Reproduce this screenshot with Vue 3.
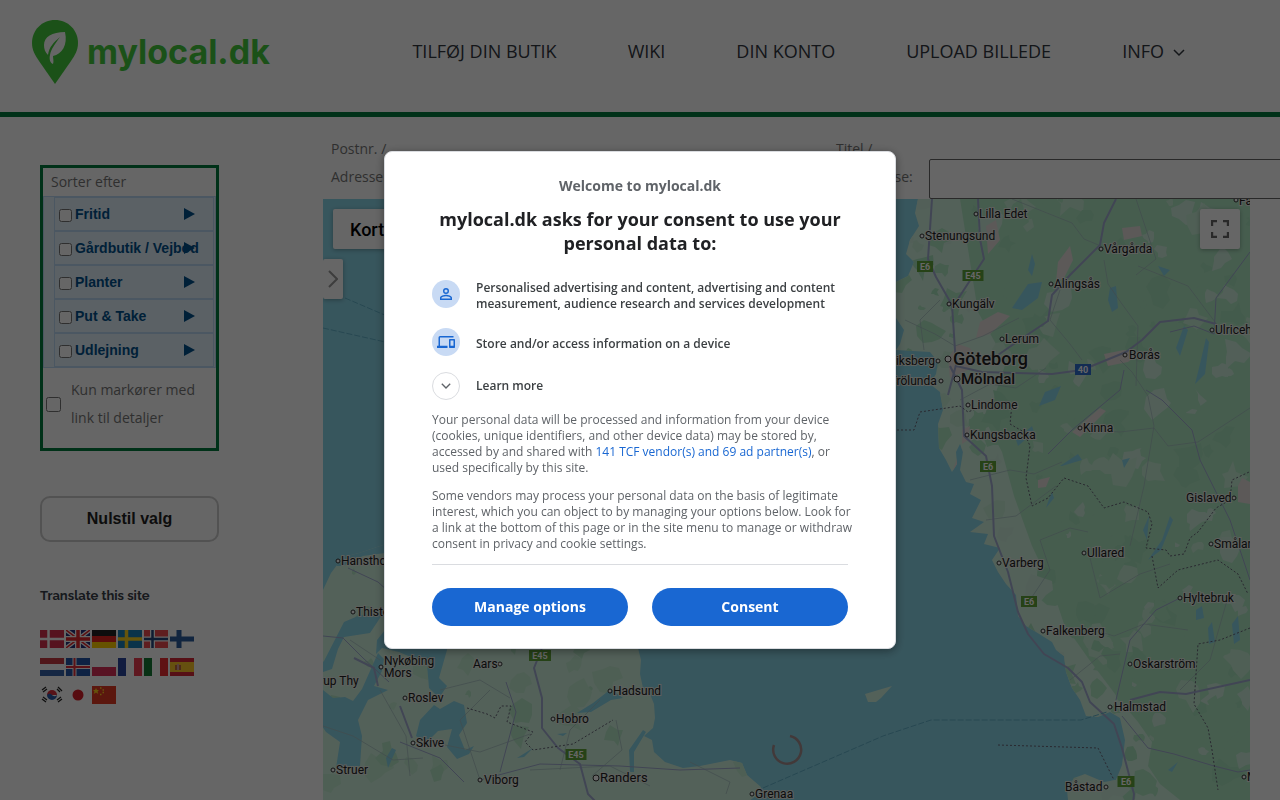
<template>
  <div class="page">
    <header class="header">
      <a href="#" class="logo" aria-label="mylocal.dk">
        <svg class="logo-pin" viewBox="0 0 46 64" width="46" height="64">
          <path d="M23 0C10 0 0 10 0 23c0 7 3 12 7 18l16 23 16-23c4-6 7-11 7-18C46 10 36 0 23 0z" fill="#44cb3c" />
          <path d="M33 12C20 12 12 17 12 25c0 4 1 7 4 10 1-8 6-13 12-18-5 7-9 12-10 18-1 4 0 8 3 9 1-3 0-5 0-8 9-2 15-11 12-24z" fill="#fff" />
        </svg>
        <span class="logo-text">mylocal.dk</span>
      </a>
      <nav class="nav">
        <a v-for="item in menu" :key="item" href="#">{{ item }}</a>
        <a href="#" class="has-sub">
          INFO
          <svg width="12" height="12" viewBox="0 0 12 12"><path d="M1 4l5 5 5-5" fill="none" stroke="currentColor" stroke-width="1.5" /></svg>
        </a>
      </nav>
    </header>

    <div class="content">
      <aside class="sidebar">
        <div class="filter">
          <p class="filter-title">Sorter efter</p>
          <ul class="categories">
            <li v-for="cat in categories" :key="cat">
              <label><input type="checkbox" v-model="selected" :value="cat" /><span>{{ cat }}</span></label>
              <svg width="11" height="12" viewBox="0 0 11 12"><path d="M0 0l11 6-11 6z" fill="#00508c" /></svg>
            </li>
          </ul>
          <label class="only-links">
            <input type="checkbox" v-model="onlyLinks" />
            <span>Kun markører med link til detaljer</span>
          </label>
        </div>
        <button class="reset" @click="reset">Nulstil valg</button>
        <h2 class="translate-title">Translate this site</h2>
        <div class="flags">
          <a v-for="flag in flags" :key="flag.name" href="#" :aria-label="flag.name">
            <svg width="24" height="18" viewBox="0 0 24 18">
              <rect width="24" height="18" :fill="flag.bg" />
              <path v-for="(s, i) in flag.shapes" :key="i" :d="s[0]" :fill="s[2] ? 'none' : s[1]" :stroke="s[2] ? s[1] : 'none'" :stroke-width="s[2] || 0" />
            </svg>
          </a>
        </div>
      </aside>

      <main class="main">
        <form class="search" @submit.prevent>
          <label for="address">Postnr. / Adresse:</label>
          <input id="address" type="text" v-model="address" />
          <label for="title">Titel / Beskrivelse:</label>
          <input id="title" type="text" v-model="title" />
        </form>
        <div class="map">
          <svg class="map-canvas" viewBox="323 199 927 601" preserveAspectRatio="xMinYMin slice">
            <defs>
              <clipPath id="sweden"><path :d="sweden" /></clipPath>
              <clipPath id="denmark"><path :d="denmark" /></clipPath>
            </defs>
            <rect x="323" y="199" width="927" height="601" fill="#8bd6e8" />
            <path :d="sweden" fill="#d0f2df" />
            <path :d="denmark" fill="#d0f2df" />
            <g clip-path="url(#sweden)">
              <path :d="forest" fill="#b0e8c4" />
              <path v-for="(b, i) in swedenBlobs" :key="i" :d="b.d" :fill="b.fill" />
              <path :d="towns" fill="#e5dedc" />
              <path :d="lakes" fill="#8bd6e8" />
            </g>
            <g clip-path="url(#denmark)">
              <path v-for="(b, i) in denmarkBlobs" :key="i" :d="b.d" :fill="b.fill" />
              <path :d="fjords" fill="#8bd6e8" />
            </g>
            <path d="M865 694l10-3 17-5-11 12-5 4h-8z" fill="#d0f2df" />
            <path :d="minorRoads" class="road minor" />
            <path :d="mainRoads" class="road main-road" />
            <path :d="highways" class="road highway" />
            <path :d="borders" class="border" />
            <path :d="ferries" class="ferry" />
            <g v-for="s in shields" :key="s.x + '-' + s.y">
              <rect :x="s.x - s.w / 2" :y="s.y - 6" :width="s.w" height="11" :fill="s.blue ? '#2f6fd0' : '#60a53a'" />
              <text :x="s.x" :y="s.y + 3" class="shield">{{ s.text }}</text>
            </g>
            <g v-for="p in places" :key="p[0]">
              <circle v-if="p[1]" :cx="p[1]" :cy="p[2]" :r="p[5] > 12 ? 3 : 2" class="dot" />
              <text :x="p[3]" :y="p[4]" :font-size="p[5]" :class="['place', { big: p[5] > 14 }]">{{ p[0] }}</text>
            </g>
            <path d="M790 736a14 14 0 1 1-16 9" fill="none" stroke="#a58e90" stroke-width="2.500" />
          </svg>
          <div class="map-type">
            <button>Kort</button>
            <button>Satellit</button>
          </div>
          <button class="map-drawer" aria-label="Vis panel">
            <svg width="10" height="18" viewBox="0 0 10 18"><path d="M1 1l8 8-8 8" fill="none" stroke="#999" stroke-width="2" /></svg>
          </button>
          <button class="map-full" aria-label="Fuld skærm">
            <svg width="18" height="18" viewBox="0 0 18 18"><path d="M1 6V1h5M12 1h5v5M17 12v5h-5M6 17H1v-5" fill="none" stroke="#666" stroke-width="2.400" /></svg>
          </button>
        </div>
      </main>
    </div>

    <div v-if="showConsent" class="overlay">
      <div class="dialog" role="dialog" aria-modal="true" aria-labelledby="consent-title">
        <p class="welcome">Welcome to mylocal.dk</p>
        <h1 id="consent-title">mylocal.dk asks for your consent to use your personal data to:</h1>
        <ul class="purposes">
          <li>
            <span class="round">
              <svg width="18" height="18" viewBox="0 0 24 24"><path fill="#1967d2" d="M12 5.9a2.1 2.1 0 1 1 0 4.2 2.1 2.1 0 0 1 0-4.2m0 9c2.97 0 6.1 1.46 6.1 2.1v1.1H5.9V17c0-.64 3.13-2.1 6.1-2.1M12 4a4 4 0 1 0 0 8 4 4 0 0 0 0-8zm0 9c-2.67 0-8 1.34-8 4v3h16v-3c0-2.66-5.33-4-8-4z" /></svg>
            </span>
            <span class="purpose-text">Personalised advertising and content, advertising and content measurement, audience research and services development</span>
          </li>
          <li>
            <span class="round">
              <svg width="18" height="18" viewBox="0 0 24 24"><path fill="#1967d2" d="M4 6h18V4H4a2 2 0 0 0-2 2v11H0v3h14v-3H4V6zm19 2h-6a1 1 0 0 0-1 1v10a1 1 0 0 0 1 1h6a1 1 0 0 0 1-1V9a1 1 0 0 0-1-1zm-1 9h-4v-7h4v7z" /></svg>
            </span>
            <span class="purpose-text">Store and/or access information on a device</span>
          </li>
        </ul>
        <button class="learn-more">
          <span class="round outline">
            <svg width="16" height="16" viewBox="0 0 24 24"><path fill="#5f6368" d="M12 16.4l-7-7L6.4 8l5.600 5.600L17.600 8 19 9.400z" /></svg>
          </span>
          <span class="purpose-text">Learn more</span>
        </button>
        <p class="legal">
          Your personal data will be processed and information from your device (cookies, unique identifiers, and other device data) may be stored by, accessed by and shared with <a href="#">141 TCF vendor(s) and 69 ad partner(s)</a>, or used specifically by this site.
        </p>
        <p class="legal">
          Some vendors may process your personal data on the basis of legitimate interest, which you can object to by managing your options below. Look for a link at the bottom of this page or in the site menu to manage or withdraw consent in privacy and cookie settings.
        </p>
        <div class="actions">
          <button>Manage options</button>
          <button @click="showConsent = false">Consent</button>
        </div>
      </div>
    </div>
  </div>
</template>

<script setup>
import { ref } from 'vue'

const menu = ['TILFØJ DIN BUTIK', 'WIKI', 'DIN KONTO', 'UPLOAD BILLEDE']
const categories = ['Fritid', 'Gårdbutik / Vejbod', 'Planter', 'Put & Take', 'Udlejning']

const selected = ref([])
const onlyLinks = ref(false)
const address = ref('')
const title = ref('')
const showConsent = ref(true)

const reset = () => {
  selected.value = []
  onlyLinks.value = false
}

// shapes: [path, color, stroke width (optional)]
const flags = [
  { name: 'Dansk', bg: '#d8314f', shapes: [['M8.5 0v18M0 9h24', '#fff', 2.5]] },
  { name: 'English', bg: '#27347d', shapes: [['M0 0l24 18M24 0L0 18', '#fff', 4], ['M0 0l24 18M24 0L0 18', '#e0282f', 1.5], ['M12 0v18M0 9h24', '#fff', 6], ['M12 0v18M0 9h24', '#e0282f', 3.5]] },
  { name: 'Deutsch', bg: '#e52420', shapes: [['M0 0h24v6H0z', '#222'], ['M0 12h24v6H0z', '#ffce00']] },
  { name: 'Svenska', bg: '#1b7fb8', shapes: [['M8.5 0v18M0 9h24', '#ffd520', 3.5]] },
  { name: 'Norsk', bg: '#ee4b50', shapes: [['M8.5 0v18M0 9h24', '#fff', 5], ['M8.5 0v18M0 9h24', '#24467d', 2.5]] },
  { name: 'Suomi', bg: '#fff', shapes: [['M9 0v18M0 9h24', '#2c5c9e', 5]] },
  { name: 'Nederlands', bg: '#fff', shapes: [['M0 0h24v6H0z', '#c83b42'], ['M0 12h24v6H0z', '#3562a8']] },
  { name: 'Íslenska', bg: '#2456a8', shapes: [['M8.5 0v18M0 9h24', '#fff', 4], ['M8.5 0v18M0 9h24', '#e22d3a', 2]] },
  { name: 'Polski', bg: '#fff', shapes: [['M0 9h24v9H0z', '#dc3059']] },
  { name: 'Français', bg: '#fff', shapes: [['M0 0h8v18H0z', '#2b479e'], ['M16 0h8v18h-8z', '#ee3d52']] },
  { name: 'Italiano', bg: '#fff', shapes: [['M0 0h8v18H0z', '#167a36'], ['M16 0h8v18h-8z', '#ee2d33']] },
  { name: 'Español', bg: '#ffc828', shapes: [['M0 0h24v4H0z', '#d62839'], ['M0 14h24v4H0z', '#d62839'], ['M5 7h6v5H5z', '#c06a3c'], ['M7 6h2v6H7z', '#d8a0a0']] },
  { name: '한국어', bg: '#fff', shapes: [['M7 9a5 5 0 0 1 10 0z', '#d92d3c'], ['M7 9a5 5 0 0 0 10 0c-2 2-4 1-5 0s-3-2-5 0z', '#2c5aa8'], ['M2 4l4-3M3 6l4-3M18 1l4 4M17 3l3 3M2 13l4 3M3 11l4 3M18 16l4-3M17 14l4-3', '#222', 1.2]] },
  { name: '日本語', bg: '#fff', shapes: [['M6.5 9a5.5 5.5 0 1 0 11 0a5.5 5.5 0 1 0-11 0z', '#d92028']] },
  { name: '中文', bg: '#e33a24', shapes: [['M4 2l1 2h2L5.5 5.5 6.3 8 4 6.5 1.7 8 2.5 5.5 1 4h2z', '#ffd21c'], ['M8 2h1.5M10.5 4H12M10.5 6.500H12M8 8.500h1.5', '#ffd21c', 1.3]] },
]

const sweden = 'M918 199L915 213 919 226 910 240 906 254 914 262 908 276 896 282V318L904 330 900 344 896 350 930 352 938 362 936 374 930 384 940 392 943 410 938 424 939 448 946 460 952 472 957 464 956 452 960 444 963 452 960 470 966 482 974 484 970 494 981 500 972 518 984 522 970 532 988 534 984 544 1000 548 992 560 998 572 1006 584 1016 595 1018 616 1026 626 1036 632 1052 642 1056 650 1064 656 1066 672 1072 688 1080 700 1086 716 1098 717 1110 712 1120 718 1125 740 1122 765 1116 780 1104 782 1085 774 1074 778 1067 790 1068 800H1250V199z'
const denmark = 'M323 590l8-17 12-16 16-4 30-10 249 105 3 12-1 14 3 14 7 6 4 10 1 14-2 10-9 8 8 4 2 12 11 10 18 6 17-2 30-6 12 3 5 12 14 12-1 6-11 8-2 12H323z'
const forest = 'M960 199h290v601h-70l-20-16-12-18 4-24-14-20-20-24-30-40-24-34-12-36-20-42-18-50-12-44-16-30 20-60-28-50z'
const towns = 'M948 358l10-14 12 4 6 10-8 12-18 8zM980 322l18-10 12 4-20 18-14 4zM1058 262l12-16 3 14-9 18-8 4zM1122 228l18-2 2 10-18 4zM1104 354l20-4 14 4-10 8-20 4zM1072 432l28-24 6 3-26 26zM986 226l10-6 4 20-12 14zM1038 480l12-3-4 10-8 1zM962 430l8-4-2 14-6 4zM953 470l8-24 2 6-8 24zM1238 486l4-8 8 4v22l-12-2z'
const lakes = 'M1012 308l16-24 14-2-4 16-16 12zM1028 270l4-16 3 10-3 12zM1110 288l6-2 2 22-6 4-4-12zM1176 348l8-22 4 4-8 26zM1200 364l6-26 3 4-4 32-10 10zM1045 392l16-6-6 14-16 6zM1016 440l16-14 2 6-16 14zM1060 466l18-12 4 6-20 6zM1122 460l8-2-6 10zM1143 530l6-14-2 24zM1148 560l14-20 8-24 3 4-12 30zM1196 610l6-4 2 12-8 2zM1208 628l4-6 3 20-6 2zM1232 624l6-8 2 24-6 4zM1168 770l10-8-6 10zM1158 266l12 4-6 6zM1048 502l4-10 2 6-8 10z'
const fjords = 'M323 566l18-13 44-10v10l-22 3-20 10zM344 622l14-6 28-7-8 12-8 12-26 4-6 12-6 20-24 8 16-16zM377 640l8-10h60l2 20-8 28 8 8-8 12-10-10-2-24-28-12-17-4-6 6zM323 690l10 8 12-1 8 4 9-12 16-36 6 6-2 12-8 15 14 4-20 10-10 20 4 16-2 30-24 2 4-26-14-10-8-12zM416 736l4-16 14-15 6 4 14-8 10 4 3 18-8 12 6 15 9-4-5 8-12 5-10-12 5-18-14 2-12 12zM577 713l16-10 18-14 12 9-12 2-20 12zM630 772l-1-22 14-20 3 2-12 20v20zM517 758l16-10-9 9zM386 758l6-10 4 2-8 18zM557 734l10-1-4 3z'

const minorRoads = 'M905 320l30 14 20 12 28-10 36-18M940 300l-20 20 4 30M1012 199l60 24 12 16 24 10 18-4M1104 260l4 24 14 20 16 22-2 60M1136 199l20 60-20 16M960 400l30-16 26 4 30-20M1060 290l-10 30 20 24 12 16M1138 266l50 20 30 40M1120 360l12 12 16 24 6 30-10 60-14 60M1090 430l30 2 34-4 14 18 30-4 52-34M970 480l40-10 24 4 28-12M986 520l30-4 40-30M1030 600l20-30-10-30 30-12 18 4M1090 558l10 40 40-24 30-10M1094 630l20 6 30-12 44 6M1070 680l30-24 20-2M1180 690l30-30 20-70M323 726l30 10 40 24 30-2M380 690l26 46 4 40M440 690l40-10 30 18M420 740l60 12 50-18M350 640l30 20M480 780l-20-60 30-30M600 700l-30 30-10 40M530 770l80-4 40 20M690 762l40 20-4 12M616 720l6 30-30 26'
const mainRoads = 'M1250 252l-34 46-2 36-20-8-24 6M1250 580l-20-60-30-60-8-30-30-30-16-10M1048 454l24-24 48-40 4-20M1122 716l26 32 26 6 40 12 24 6 12-2M1116 700l14-60 26-30 24-12M323 636l20 2 20 20 26 24M400 742l40 16 24 24M480 780l60-16 80 2 60 4 60-2M348 568l30 14 20 18M500 772l16-60-10-30'
const highways = 'M932 199l-4 60 8 18 16 28 4 60-8 30M950 366l12 24 2 46 22 20 6 30 2 50 14 36 10 40 10 22 16 20 24 14 14 14 8 20 24 22 8 24 12 46-6 60M978 199l2 40 4 20-30 46M1116 199l-12 24-4 22-30 30-18 20-4 26-30 20-20 14-24 4M956 366l26 6 70 2 30-4 44-18 16-12 18-18 34-4 22 6M1130 700l30-8 26 2 64-14M542 648l-8 20 8 30v30l16 20 22 16 8 30 30 30M354 658l20 10 4 18M400 706l12 32'
const borders = 'M897 430h17l6-18 40-6 8 6 10-4M1012 404l-2 20 14 8 6 14-4 32 6 28 16-8 16-20 24 8 16 22 20-6 24 10 4 12-6 24 20 2 4 6 14-2 6-16 8-6 18-24 14-8 2-20 30-14 30-60M1152 556l6 32 20-18 40-10 20 14 10 20M1250 628l-30 12-22 4-4 60 14 24 4 22 6 40M998 745l100 3 16 32M467 708l20 6 8 4 6-12h10l-4 16 26 10-8 10 8 8 40-6 40-24'
const ferries = 'M345 298l70 30M323 328l80 18M763 788l120-52 48-16h150l26-8'

// Map surface texture: small repeatable generator so the patches stay put between renders
let seed = 7
const rand = () => {
  seed = (seed * 16807) % 2147483647
  return seed / 2147483647
}
const makeBlobs = (count, x, y, w, h, colors) =>
  Array.from({ length: count }, () => {
    const cx = x + rand() * w
    const cy = y + rand() * h
    const size = 3 + rand() * 14
    const points = Array.from({ length: 9 }, (_, k) => {
      const a = (k / 9) * Math.PI * 2
      const r = size * (0.4 + rand() * 0.8)
      return `${Math.round(cx + Math.cos(a) * r)} ${Math.round(cy + Math.sin(a) * r)}`
    })
    return { d: `M${points.join('L')}z`, fill: colors[Math.floor(rand() * colors.length)] }
  })
const swedenBlobs = makeBlobs(330, 896, 199, 354, 601, ['#cdeedd', '#c6edd5', '#b0e8c4', '#b0e8c4', '#a9e3bd'])
const denmarkBlobs = makeBlobs(50, 323, 550, 430, 250, ['#b7e8c8', '#c3eed2'])

// label, dot x, dot y, text x, text y, font size
const places = [
  ['Lilla Edet', 976, 214, 979, 218, 12],
  ['Stenungsund', 922, 236, 925, 240, 12],
  ['Vårgårda', 1101, 249, 1104, 253, 12],
  ['Fa', 1236, 200, 1239, 205, 12],
  ['Alingsås', 1051, 284, 1054, 288, 12],
  ['Kungälv', 949, 304, 952, 308, 12],
  ['Lerum', 1002, 339, 1005, 343, 12],
  ['Ulricehamn', 1212, 330, 1215, 334, 12],
  ['Borås', 1125, 355, 1129, 359, 12],
  ['Göteborg', 948, 359, 953, 365, 18],
  ['Eriksberg', 938, 361, 885, 365, 12],
  ['Mölndal', 957, 379, 961, 384, 15],
  ['Frölunda', 941, 381, 890, 385, 12],
  ['Lindome', 968, 405, 971, 409, 12],
  ['Kinna', 1080, 428, 1083, 432, 12],
  ['Kungsbacka', 967, 435, 970, 439, 12],
  ['Gislaved', 1234, 498, 1186, 502, 12],
  ['Småland', 1211, 544, 1214, 548, 12],
  ['Ullared', 1084, 553, 1087, 557, 12],
  ['Varberg', 999, 563, 1002, 567, 12],
  ['Hyltebruk', 1180, 598, 1183, 602, 12],
  ['Falkenberg', 1043, 631, 1046, 635, 12],
  ['Oskarström', 1130, 664, 1133, 668, 12],
  ['Halmstad', 1110, 707, 1114, 711, 12],
  ['Båstad', 1106, 787, 1065, 791, 12],
  ['Markaryd', 1244, 777, 1247, 781, 12],
  ['Hanstholm', 338, 561, 341, 565, 12],
  ['Thisted', 353, 612, 356, 616, 12],
  ['Nykøbing', 381, 667, 384, 665, 12],
  ['Mors', 0, 0, 384, 677, 12],
  ['Hurup Thy', 0, 0, 304, 685, 12],
  ['Aars', 500, 664, 473, 668, 12],
  ['Roslev', 405, 698, 408, 702, 12],
  ['Hadsund', 610, 691, 613, 695, 12],
  ['Hobro', 553, 719, 556, 723, 12],
  ['Skive', 413, 743, 416, 747, 12],
  ['Struer', 333, 770, 336, 774, 12],
  ['Viborg', 480, 780, 484, 784, 12],
  ['Randers', 596, 778, 600, 782, 13],
  ['Grenaa', 752, 794, 755, 798, 12],
]

const shields = [
  { text: 'E6', x: 925, y: 267, w: 16 },
  { text: 'E45', x: 973, y: 276, w: 21 },
  { text: '40', x: 1083, y: 370, w: 16, blue: true },
  { text: 'E6', x: 988, y: 467, w: 16 },
  { text: 'E6', x: 1029, y: 602, w: 16 },
  { text: 'E45', x: 540, y: 656, w: 22 },
  { text: 'E45', x: 576, y: 755, w: 21 },
  { text: 'E6', x: 1126, y: 782, w: 17 },
]
</script>

<style>
body {
  background: #fff;
}
</style>

<style scoped>
.page {
  height: 100vh;
  display: flex;
  flex-direction: column;
  overflow: hidden;
  background: #fff;
  color: #777;
  font-family: "Open Sans", "Noto Sans", sans-serif;
  font-size: 14px;
  line-height: 28px;
}

.page *,
.page {
  box-sizing: border-box;
}

p,
h1,
h2,
ul {
  margin: 0;
  padding: 0;
  list-style: none;
}

a {
  color: inherit;
  text-decoration: none;
}

button {
  cursor: pointer;
}

.header {
  display: flex;
  justify-content: space-between;
  padding: 20px 95px 28px 32px;
  border-bottom: 5px solid #007a3d;
}

.logo {
  display: flex;
  gap: 9px;
  color: #44cb3c;
}

.logo-text {
  font-family: Inter, sans-serif;
  font-weight: 700;
  font-size: 34px;
  line-height: 64px;
}

.nav {
  display: flex;
  gap: 71px;
  color: #32373f;
  font-size: 18px;
  line-height: 62px;
}

.has-sub {
  display: flex;
  gap: 9px;
}

.has-sub svg {
  margin-top: 26px;
}

.content {
  flex: 1;
  min-height: 0;
  display: flex;
  gap: 104px;
  padding: 0 30px 0 40px;
}

.sidebar {
  flex: 0 0 179px;
  min-width: 0;
  padding-top: 48px;
}

.filter {
  border: 3px solid #007a3d;
  padding-bottom: 8px;
}

.filter-title {
  padding-left: 8px;
  line-height: 28px;
}

.categories {
  padding: 0 1px 0 10px;
  border: 1px solid #bcdaf6;
  background: #e4f2fc;
}

.categories li {
  display: flex;
  align-items: center;
  height: 34px;
  padding-right: 18px;
  border: 1px solid #bcdaf6;
}

.categories label {
  flex: 1;
  min-width: 0;
  display: flex;
  align-items: center;
  gap: 3px;
  white-space: nowrap;
  font-family: "Liberation Sans", Arial, sans-serif;
  font-weight: bold;
  color: #00508c;
}

.categories input {
  flex: none;
  width: 13px;
  height: 13px;
  margin: 3px 0 0 4px;
}

.categories svg {
  flex: none;
}

.only-links {
  display: flex;
  align-items: center;
  gap: 10px;
  padding: 8px 8px 8px 3px;
}

.only-links input {
  flex: none;
  width: 15px;
  height: 15px;
  margin: 0;
}

.reset {
  width: 100%;
  height: 46px;
  margin-top: 45px;
  border: 2px solid #ccc;
  border-radius: 10px;
  background: #fff;
  color: #222;
  font: bold 16px "Liberation Sans", Arial, sans-serif;
}

.translate-title {
  margin-top: 40px;
  color: #3a3f4a;
  font-family: Raleway, Lato, sans-serif;
  font-size: 13px;
  font-weight: 700;
  line-height: 28px;
}

.flags {
  display: grid;
  grid-template-columns: repeat(6, 24px);
  gap: 10px 2px;
  margin-top: 20px;
}

.flags svg {
  display: block;
}

.flags a {
  height: 18px;
}

.main {
  flex: 1;
  min-width: 0;
  display: flex;
  flex-direction: column;
}

.search {
  flex: none;
  display: grid;
  grid-template-columns: 74px 403px 79px 410px;
  column-gap: 14px;
  align-items: end;
  padding: 18px 0 0 8px;
  height: 82px;
}

.search label {
  align-self: start;
}

.search input {
  width: 100%;
  height: 40px;
  border: 1px solid #666;
  border-radius: 2px;
  background: #fff;
}

.map {
  position: relative;
  flex: 1;
  min-height: 0;
  overflow: hidden;
}

.map-canvas {
  display: block;
  width: 100%;
  height: 100%;
}

.road {
  fill: none;
  stroke: #a3add2;
  stroke-linejoin: round;
}

.minor {
  stroke: #a5bfc0;
  stroke-width: 0.7;
}

.main-road {
  stroke-width: 1;
}

.highway {
  stroke-width: 2;
}

.border {
  fill: none;
  stroke: #667;
  stroke-width: 1;
  stroke-dasharray: 2 2;
}

.ferry {
  fill: none;
  stroke: #62b4cc;
  stroke-width: 1;
  stroke-dasharray: 6 2;
}

.place,
.shield {
  font-family: Roboto, sans-serif;
}

.place {
  fill: #222;
  stroke: #e8efe9;
  stroke-width: 2px;
  paint-order: stroke;
}

.big {
  font-weight: 500;
}

.shield {
  fill: #fff;
  font-size: 9px;
  font-weight: 700;
  text-anchor: middle;
}

.dot {
  fill: #fff;
  stroke: #333;
  stroke-width: 1;
}

.map-type {
  position: absolute;
  top: 10px;
  left: 10px;
  display: flex;
  border-radius: 2px;
  background: #fff;
  box-shadow: 0 1px 4px rgba(0, 0, 0, 0.3);
}

.map-type button {
  height: 40px;
  padding: 0 17px;
  border: 0;
  background: none;
  font: 500 18px Roboto, sans-serif;
}

.map-drawer,
.map-full {
  position: absolute;
  display: flex;
  align-items: center;
  justify-content: center;
  height: 40px;
  padding: 0;
  border: 0;
  border-radius: 2px;
  background: #fff;
  box-shadow: 0 1px 4px rgba(0, 0, 0, 0.3);
}

.map-drawer {
  top: 60px;
  left: 0;
  width: 20px;
}

.map-full {
  top: 10px;
  right: 10px;
  width: 40px;
}

.overlay {
  position: fixed;
  inset: 0;
  z-index: 10;
  display: flex;
  align-items: center;
  justify-content: center;
  background: rgba(0, 0, 0, 0.6);
}

.dialog {
  width: 512px;
  max-width: 100%;
  padding: 24px 47px 22px;
  border: 1px solid #dadce0;
  border-radius: 8px;
  background: #fff;
  box-shadow: 0 2px 10px rgba(0, 0, 0, 0.4);
  color: #5f6368;
  font-size: 12px;
  line-height: 16px;
}

.welcome {
  font-size: 14px;
  font-weight: 700;
  line-height: 20px;
  text-align: center;
}

h1 {
  margin-top: 11px;
  color: #202124;
  font-size: 18px;
  font-weight: 700;
  line-height: 24px;
  text-align: center;
}

.purposes {
  display: grid;
  gap: 16px;
  margin: 25px 0 12px;
}

.purposes li {
  display: flex;
  gap: 16px;
  min-height: 32px;
}

.round {
  flex: none;
  display: flex;
  align-items: center;
  justify-content: center;
  width: 28px;
  height: 28px;
  border-radius: 50%;
  background: #c8daf4;
}

.outline {
  border: 1px solid #dadce0;
  background: none;
}

.purpose-text {
  align-self: center;
  color: #3c4043;
  font-weight: 600;
}

.learn-more {
  display: flex;
  gap: 16px;
  padding: 0;
  border: 0;
  background: none;
  font: inherit;
}

.legal {
  margin: 12px -6px 0 0;
}

.legal a {
  color: #1967d2;
}

.actions {
  display: grid;
  grid-template-columns: 1fr 1fr;
  gap: 24px;
  margin-top: 12px;
  padding-top: 23px;
  border-top: 1px solid #dadce0;
}

.actions button {
  height: 38px;
  padding-bottom: 2px;
  border: 0;
  border-radius: 19px;
  background: #1967d2;
  color: #fff;
  font: 700 14px "Open Sans", sans-serif;
}
</style>
